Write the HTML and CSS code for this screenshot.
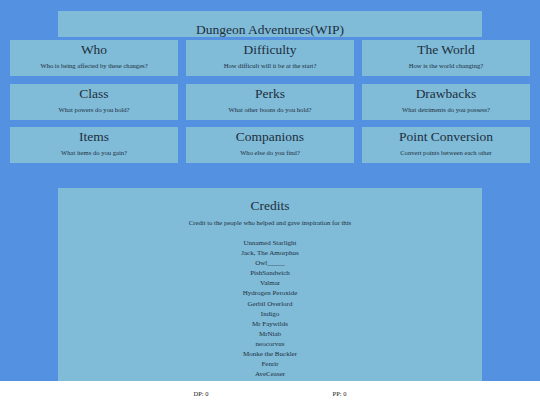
FILE: index.html
```html
<!DOCTYPE html>
<html>
<head>
<meta charset="utf-8">
<link rel="stylesheet" href="styles.css">
</head>
<body>
<header class="banner"><h1 class="banner-title">Dungeon Adventures(WIP)</h1></header>
<main class="grid">
  <section class="card"><h2 class="card-title">Who</h2><p class="card-sub">Who is being affected by these changes?</p></section>
  <section class="card"><h2 class="card-title">Difficulty</h2><p class="card-sub">How difficult will it be at the start?</p></section>
  <section class="card"><h2 class="card-title">The World</h2><p class="card-sub">How is the world changing?</p></section>
  <section class="card"><h2 class="card-title">Class</h2><p class="card-sub">What powers do you hold?</p></section>
  <section class="card"><h2 class="card-title">Perks</h2><p class="card-sub">What other boons do you hold?</p></section>
  <section class="card"><h2 class="card-title">Drawbacks</h2><p class="card-sub">What detriments do you possess?</p></section>
  <section class="card"><h2 class="card-title">Items</h2><p class="card-sub">What items do you gain?</p></section>
  <section class="card"><h2 class="card-title">Companions</h2><p class="card-sub">Who else do you find?</p></section>
  <section class="card"><h2 class="card-title">Point Conversion</h2><p class="card-sub">Convert points between each other</p></section>
</main>
<section class="credits">
  <h2 class="credits-title">Credits</h2>
  <p class="credits-sub">Credit to the people who helped and gave inspiration for this</p>
  <ul class="credits-list">
    <li>Unnamed Starlight</li>
    <li>Jack, The Amorphus</li>
    <li>Owl_____</li>
    <li>PishSandwich</li>
    <li>Valmar</li>
    <li>Hydrogen Peroxide</li>
    <li>Gerbil Overlord</li>
    <li>Indigo</li>
    <li>Mr Faywilds</li>
    <li>MrNiab</li>
    <li>neocorvus</li>
    <li>Monke the Buckler</li>
    <li>Fenrir</li>
    <li>AveCeaser</li>
  </ul>
</section>
<footer class="points">
  <span class="point">DP: 0</span>
  <span class="point">PP: 0</span>
</footer>
</body>
</html>
```
FILE: styles.css
```css
html, body {
  margin: 0;
  padding: 0;
}
body {
  background: #5591e1;
  font-family: "Liberation Serif", "Times New Roman", serif;
  color: #1d2f3d;
  padding-top: 11px;
  height: 394px;
  overflow: hidden;
}
.banner {
  margin: 0 58px;
  height: 26px;
  background: #80bbd8;
  display: flex;
  align-items: flex-end;
  justify-content: center;
}
.banner-title {
  margin: 0;
  font-weight: normal;
  font-size: 13.5px;
  line-height: 14px;
}
.grid {
  display: grid;
  grid-template-columns: repeat(3, 1fr);
  column-gap: 8px;
  row-gap: 7.5px;
  padding: 3px 10px 0;
}
.card {
  background: #80bbd8;
  height: 36px;
  display: flex;
  flex-direction: column;
  align-items: center;
}
.card-title {
  margin: 1px 0 0;
  font-weight: normal;
  font-size: 13.5px;
  line-height: 17px;
}
.card-sub {
  margin: 4px 0 0;
  font-size: 6.6px;
  line-height: 8px;
}
.credits {
  margin: 25px 58px 0;
  background: #80bbd8;
  text-align: center;
  padding-top: 9px;
  height: 190px;
}
.credits-title {
  margin: 0;
  font-weight: normal;
  font-size: 13.5px;
  line-height: 17px;
}
.credits-sub {
  margin: 5px 0 0;
  font-size: 6.7px;
  line-height: 8px;
}
.credits-list {
  list-style: none;
  margin: 11px 0 0;
  padding: 0;
  font-size: 7px;
  line-height: 10.1px;
}
.points {
  position: fixed;
  left: 0;
  right: 0;
  bottom: 0;
  height: 24px;
  background: #ffffff;
  display: flex;
  justify-content: center;
  align-items: center;
  gap: 124px;
  font-size: 6.5px;
  color: #222;
}
```
